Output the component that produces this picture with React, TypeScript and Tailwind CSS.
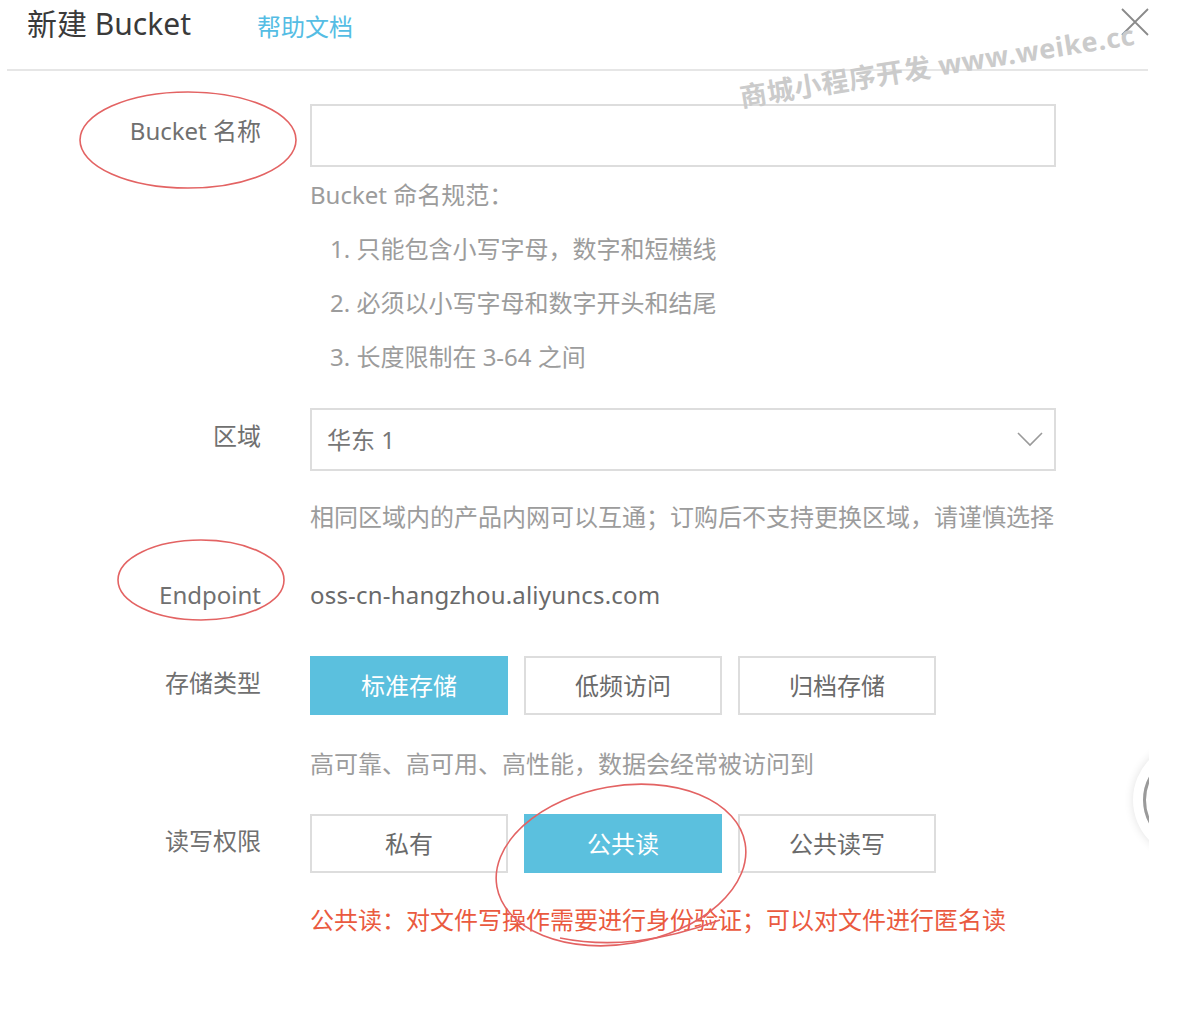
import React from "react";

const font = { fontFamily: '"Noto Sans", "Noto Sans CJK SC", sans-serif' };

function Btn({ label, active }: { label: string; active?: boolean }) {
  return (
    <div
      className={
        active
          ? "w-[198px] h-[59px] flex items-center justify-center bg-[#5bc0de] text-white text-[24px]"
          : "w-[198px] h-[59px] flex items-center justify-center border-2 border-[#dddddd] bg-white text-[#6a6a6a] text-[24px]"
      }
    >
      {label}
    </div>
  );
}

export default function App() {
  return (
    <div className="relative w-[1182px] h-[1010px] bg-white overflow-hidden" style={font}>
      {/* header */}
      <div className="flex items-start">
        <div className="ml-[27px] mt-[4px] leading-[40px] text-[30px] text-[#3a3a3a]">新建 Bucket</div>
        <div className="ml-[66px] mt-[11px] leading-[32px] text-[24px] text-[#55bde4]">帮助文档</div>
      </div>
      <div className="ml-[7px] mr-[34px] mt-[25px] h-[2px] bg-[#e6e6e6]" />

      {/* row 1 */}
      <div className="flex mt-[33px]">
        <div className="w-[261px] text-right text-[24px] leading-[32px] text-[#707070] mt-[11px]">Bucket 名称</div>
        <div className="ml-[49px] w-[746px]">
          <div className="h-[63px] border-2 border-[#dddddd]" />
          <div className="mt-[1px] text-[24px] leading-[54px] text-[#9c9c9c]">
            <div>Bucket 命名规范：</div>
            <div className="pl-[20px]">1. 只能包含小写字母，数字和短横线</div>
            <div className="pl-[20px]">2. 必须以小写字母和数字开头和结尾</div>
            <div className="pl-[20px]">3. 长度限制在 3-64 之间</div>
          </div>
        </div>
      </div>

      {/* region */}
      <div className="flex mt-[24px]">
        <div className="w-[261px] text-right text-[24px] leading-[32px] text-[#707070] mt-[12px]">区域</div>
        <div className="ml-[49px] w-[746px]">
          <div className="h-[63px] border-2 border-[#dddddd] flex items-center justify-between pl-[15px] pr-[11px]">
            <span className="text-[24px] text-[#777777]">华东 1</span>
            <svg width="26" height="15" viewBox="0 0 26 15">
              <path d="M1 1 L13 13 L25 1" fill="none" stroke="#9a9a9a" strokeWidth="1.6" />
            </svg>
          </div>
          <div className="mt-[30px] text-[24px] leading-[32px] text-[#9c9c9c]">
            相同区域内的产品内网可以互通；订购后不支持更换区域，请谨慎选择
          </div>
        </div>
      </div>

      {/* endpoint */}
      <div className="flex items-center mt-[46px]">
        <div className="w-[261px] text-right text-[24px] leading-[32px] text-[#707070]">Endpoint</div>
        <div className="ml-[49px] text-[24px] leading-[32px] text-[#6a6a6a] tracking-[0.2px]">oss-cn-hangzhou.aliyuncs.com</div>
      </div>

      {/* storage type */}
      <div className="flex mt-[45px]">
        <div className="w-[261px] text-right text-[24px] leading-[32px] text-[#707070] mt-[11px]">存储类型</div>
        <div className="ml-[49px] w-[746px]">
          <div className="flex gap-[16px]">
            <Btn label="标准存储" active />
            <Btn label="低频访问" />
            <Btn label="归档存储" />
          </div>
          <div className="mt-[33px] text-[24px] leading-[32px] text-[#9c9c9c]">
            高可靠、高可用、高性能，数据会经常被访问到
          </div>
        </div>
      </div>

      {/* ACL */}
      <div className="flex mt-[34px]">
        <div className="w-[261px] text-right text-[24px] leading-[32px] text-[#707070] mt-[11px]">读写权限</div>
        <div className="ml-[49px] w-[746px]">
          <div className="flex gap-[16px]">
            <Btn label="私有" />
            <Btn label="公共读" active />
            <Btn label="公共读写" />
          </div>
          <div className="mt-[31px] text-[24px] leading-[32px] text-[#ea5a40]">
            公共读：对文件写操作需要进行身份验证；可以对文件进行匿名读
          </div>
        </div>
      </div>

      {/* close X */}
      <svg className="absolute left-[1120px] top-[7px]" width="30" height="30" viewBox="0 0 30 30">
        <path d="M2 2 L28 28 M28 2 L2 28" stroke="#8a8a8a" strokeWidth="1.8" fill="none" />
      </svg>

      {/* watermark */}
      <div className="absolute left-[740px] top-[82px] whitespace-nowrap text-[27px] leading-[30px] font-bold tracking-[0.6px] text-[#cbcbcb] origin-left -rotate-[9deg]">
        商城小程序开发 www.weike.cc
      </div>

      {/* floating circle partially hidden */}
      <div className="absolute left-[1100px] top-[740px] w-[49px] h-[130px] overflow-hidden">
        <div className="absolute left-[33px] top-[2px] w-[116px] h-[116px] rounded-full bg-white shadow-[0_0_10px_rgba(0,0,0,0.12)]">
          <div className="absolute left-[10px] top-[10px] w-[96px] h-[96px] rounded-full border-[3px] border-[#9a9a9a]" />
        </div>
      </div>

      {/* red annotations */}
      <svg className="absolute left-0 top-0 pointer-events-none" width="1182" height="1010" viewBox="0 0 1182 1010">
        <g fill="none" stroke="#e36363" strokeWidth="1.6">
          <ellipse cx="188" cy="140" rx="108" ry="48" />
          <ellipse cx="201" cy="580" rx="83" ry="40" />
          <ellipse cx="621" cy="865" rx="126" ry="79" transform="rotate(-10 621 865)" />
          <path d="M560 938 C 610 948, 660 942, 720 920" />
        </g>
      </svg>
    </div>
  );
}
